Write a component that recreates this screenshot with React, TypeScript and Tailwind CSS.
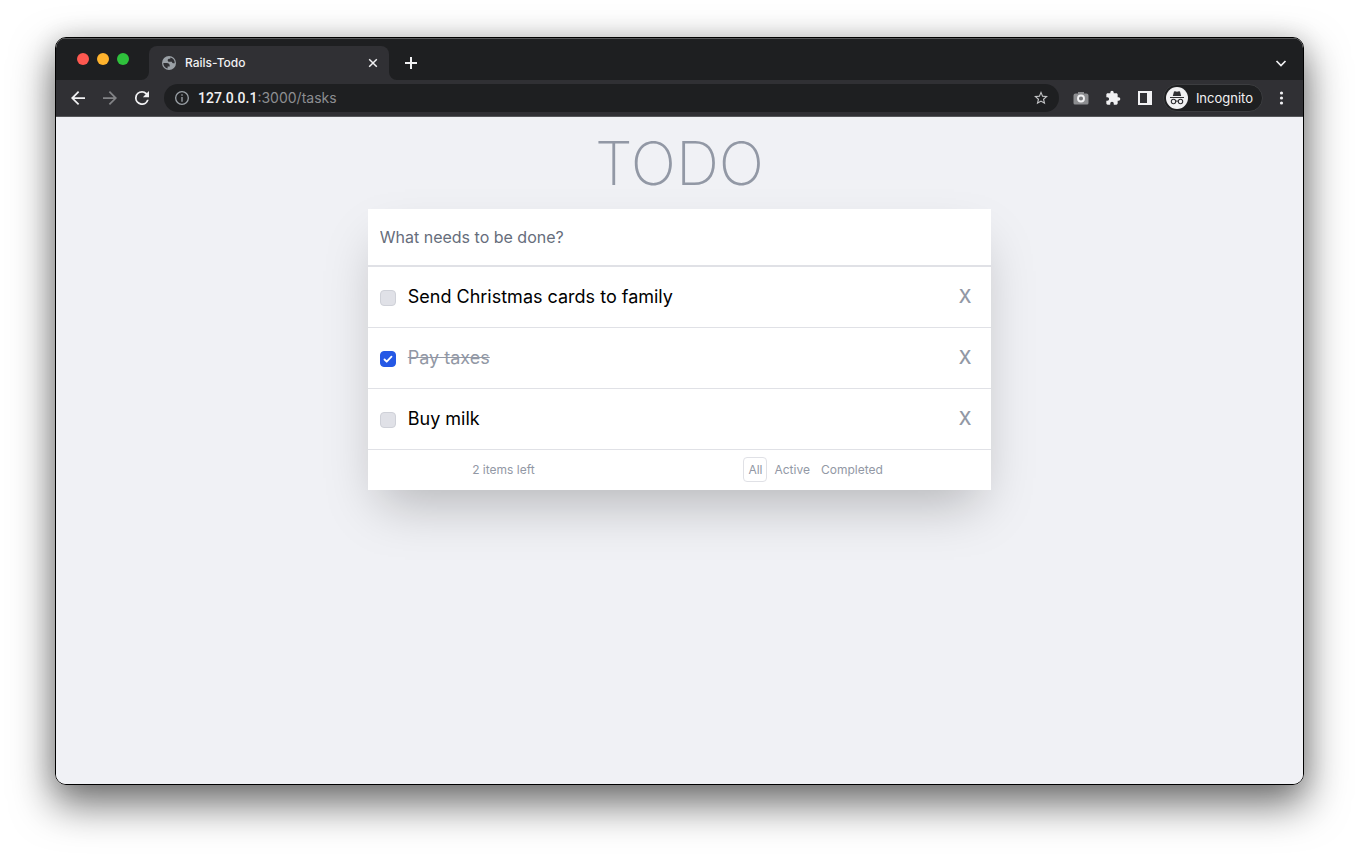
import { useState } from "react";

type Task = { id: number; title: string; done: boolean };

const initialTasks: Task[] = [
  { id: 1, title: "Send Christmas cards to family", done: false },
  { id: 2, title: "Pay taxes", done: true },
  { id: 3, title: "Buy milk", done: false },
];

const filters = ["All", "Active", "Completed"] as const;
type Filter = (typeof filters)[number];

function TabStrip() {
  return (
    <div className="flex h-[42px] items-end bg-[#1e1f21] pl-[21px] pr-[15px] shadow-[inset_0_1px_0_#57585a]">
      <div className="flex gap-2 pb-[15px]">
        <button aria-label="Close window" className="size-3 rounded-full bg-[#fe5850]" />
        <button aria-label="Minimize window" className="size-3 rounded-full bg-[#ffb32d]" />
        <button aria-label="Zoom window" className="size-3 rounded-full bg-[#2fc13c]" />
      </div>
      <TabCorner side="left" />
      <div className="flex h-[34px] w-60 items-center rounded-t-lg bg-[#303034] pl-3 pr-2.5 text-[12px] font-medium text-[#f1f1f3]">
        <svg viewBox="0 0 16 16" className="size-4" aria-hidden="true">
          <circle cx="8" cy="8" r="7" fill="#9aa0a6" />
          <path
            d="M2.300 8H5.600C8 8 9 9.200 8.700 11.600H6.600V13.400A5.700 5.700 0 0 1 2.300 8zM9.300 2.400A5.700 5.700 0 0 1 13.700 8.200H12.200C11.500 8.200 11.200 7.900 11 7.300L10.800 6.800H8.600C7.300 6.800 6.700 6.200 6.700 5.200S7.400 3.700 8.400 3.700H9.300z"
            fill="#303034"
          />
        </svg>
        <span className="ml-2 flex-1">Rails-Todo</span>
        <button aria-label="Close tab">
          <svg viewBox="0 0 12 12" className="size-3" fill="none" stroke="currentColor" strokeWidth="1.500" aria-hidden="true">
            <path d="M2.200 2.200l7.600 7.600M9.800 2.200l-7.600 7.600" />
          </svg>
        </button>
      </div>
      <TabCorner side="right" />
      <button aria-label="New tab" className="ml-[7px] mb-2.5 text-[#f1f1f3]">
        <svg viewBox="0 0 14 14" className="size-3.5" fill="none" stroke="currentColor" strokeWidth="2" aria-hidden="true">
          <path d="M7 1v12M1 7h12" />
        </svg>
      </button>
      <button aria-label="Search tabs" className="ml-auto mb-2.5 text-[#f1f1f3]">
        <svg viewBox="0 0 14 14" className="size-3.5" fill="none" stroke="currentColor" strokeWidth="1.700" aria-hidden="true">
          <path d="M2.500 5l4.500 4.500L11.500 5" />
        </svg>
      </button>
    </div>
  );
}

function TabCorner({ side }: { side: "left" | "right" }) {
  return (
    <svg viewBox="0 0 8 8" className={side === "left" ? "ml-3 size-2" : "size-2"} fill="#303034" aria-hidden="true">
      <path d={side === "left" ? "M8 0v8H0a8 8 0 0 0 8-8z" : "M0 0v8h8a8 8 0 0 1-8-8z"} />
    </svg>
  );
}

function Toolbar() {
  return (
    <div className="flex h-[37px] items-center border-b border-[#56575a] bg-[#303034] px-[15px] text-[#f1f1f3]">
      <button aria-label="Back">
        <svg viewBox="4 4 16 16" className="size-3.5" fill="currentColor" aria-hidden="true">
          <path d="M20 11H7.830l5.590-5.590L12 4l-8 8 8 8 1.410-1.410L7.830 13H20z" />
        </svg>
      </button>
      <button aria-label="Forward" className="ml-[18px] text-[#828386]">
        <svg viewBox="4 4 16 16" className="size-3.5" fill="currentColor" aria-hidden="true">
          <path d="M12 4l-1.410 1.410L16.170 11H4v2h12.170l-5.580 5.590L12 20l8-8z" />
        </svg>
      </button>
      <button aria-label="Reload" className="ml-[18px]">
        <svg viewBox="4 4 16 16" className="size-3.5" fill="currentColor" aria-hidden="true">
          <path d="M17.650 6.350A7.958 7.958 0 0 0 12 4a8 8 0 1 0 7.730 10h-2.080A6 6 0 1 1 12 6c1.660 0 3.140.69 4.220 1.780L13 11h7V4z" />
        </svg>
      </button>
      <div className="ml-[15px] flex h-7 flex-1 items-center rounded-full bg-[#1e1f21] pl-2.5 pr-[11px]">
        <svg viewBox="0 0 24 24" className="size-4 shrink-0 fill-[#9aa0a6]" aria-hidden="true">
          <path d="M11 6.500h2v2.200h-2zm0 4h2v7h-2zm1-9a10.500 10.500 0 1 0 0 21 10.500 10.500 0 0 0 0-21zm0 19a8.500 8.500 0 1 1 0-17 8.500 8.500 0 0 1 0 17z" />
        </svg>
        <a href="#tasks" className="ml-2 flex-1 text-[14px] leading-4 text-[#8d8e91]">
          <span className="font-['Roboto',sans-serif] font-medium text-[#f1f1f3]">127.0.0.1</span>:3000/tasks
        </a>
        <button aria-label="Bookmark this tab" className="text-[#c3c4c6]">
          <svg viewBox="2 2 20 20" className="size-3.5" fill="currentColor" aria-hidden="true">
            <path d="M22 9.240l-7.190-.62L12 2 9.190 8.630 2 9.240l5.460 4.730L5.820 21 12 17.270 18.180 21l-1.630-7.030zM12 15.400l-3.760 2.270 1-4.280-3.320-2.880 4.380-.38L12 6.100l1.710 4.040 4.380.38-3.320 2.880 1 4.280z" />
          </svg>
        </button>
      </div>
      <button aria-label="Screenshot" className="ml-3.5">
        <svg viewBox="0 0 16 16" className="size-4" aria-hidden="true">
          <path d="M5 2h6v1.500h2.500a2 2 0 0 1 2 2V13a1.500 1.500 0 0 1-1.500 1.500H2A1.500 1.500 0 0 1 .5 13V5.500a2 2 0 0 1 2-2H5z" fill="#8d8e91" />
          <circle cx="8" cy="8.500" r="3" fill="#77787b" stroke="#f1f1f3" strokeWidth="1.900" />
        </svg>
      </button>
      <button aria-label="Extensions" className="ml-4">
        <svg viewBox="0 0 24 24" className="size-4" fill="currentColor" aria-hidden="true">
          <path d="M20.500 11H19V7c0-1.100-.9-2-2-2h-4V3.500a2.500 2.500 0 0 0-5 0V5H4c-1.100 0-1.990.9-1.990 2v3.800H3.500a2.700 2.700 0 0 1 0 5.400H2V20c0 1.100.9 2 2 2h3.800v-1.500a2.700 2.700 0 0 1 5.400 0V22H17c1.100 0 2-.9 2-2v-4h1.500a2.500 2.500 0 0 0 0-5z" />
        </svg>
      </button>
      <button aria-label="Side panel" className="ml-4">
        <svg viewBox="0 0 16 16" className="size-4" fill="currentColor" aria-hidden="true">
          <path d="M1 1h14v14H1zM3 3v10h7V3z" fillRule="evenodd" />
        </svg>
      </button>
      <button className="ml-2.5 flex h-7 items-center gap-2 rounded-full border border-[#3c3d40] bg-[#1e1f21] pl-0.5 pr-[9px] text-[13px] leading-4">
        <svg viewBox="0 0 22 22" className="size-[22px]" aria-hidden="true">
          <circle cx="11" cy="11" r="11" fill="#f1f1f3" />
          <path d="M8 4.500l1-.3 2 .6 2-.6 1 .3L15.200 9H6.800zM4 10h14v1.100H4z" fill="#303034" />
          <g fill="none" stroke="#303034" strokeWidth="1.100">
            <circle cx="7.500" cy="14.500" r="2.200" />
            <circle cx="14.500" cy="14.500" r="2.200" />
            <path d="M9.700 14.300q1.300-.7 2.600 0" />
          </g>
        </svg>
        Incognito
      </button>
      <button aria-label="Browser menu" className="ml-[13px]">
        <svg viewBox="0 0 12 16" className="h-4 w-3" fill="currentColor" aria-hidden="true">
          <circle cx="5.500" cy="3" r="1.600" />
          <circle cx="5.500" cy="8" r="1.600" />
          <circle cx="5.500" cy="13" r="1.600" />
        </svg>
      </button>
    </div>
  );
}

function TaskRow({ task, onToggle, onRemove }: { task: Task; onToggle: () => void; onRemove: () => void }) {
  const id = `task-${task.id}`;
  return (
    <li className="flex items-center border-b border-[#e0e1e6] py-4 pl-3 pr-5 text-lg">
      <span className="mt-0.5 grid size-4">
        <input
          id={id}
          type="checkbox"
          checked={task.done}
          onChange={onToggle}
          className="peer col-start-1 row-start-1 size-4 appearance-none rounded border border-[#cfd1d8] bg-[#e0e1e7] checked:border-[#2558e5] checked:bg-[#2558e5]"
        />
        <svg
          viewBox="0 0 16 16"
          className="pointer-events-none invisible col-start-1 row-start-1 size-4 peer-checked:visible"
          fill="none"
          stroke="white"
          strokeWidth="1.800"
          strokeLinecap="round"
          strokeLinejoin="round"
          aria-hidden="true"
        >
          <path d="M4.500 8.500l2.200 2.200L11.500 5.700" />
        </svg>
      </span>
      <label htmlFor={id} className={task.done ? "ml-3 flex-1 text-[#9298a5] line-through" : "ml-3 flex-1 text-black"}>
        {task.title}
      </label>
      <button onClick={onRemove} aria-label={`Delete ${task.title}`} className="font-medium text-[#9298a5]">
        X
      </button>
    </li>
  );
}

function TodoApp() {
  const [tasks, setTasks] = useState(initialTasks);
  const [filter, setFilter] = useState<Filter>("All");
  const [draft, setDraft] = useState("");
  const shown = tasks.filter((t) => filter === "All" || t.done === (filter === "Completed"));

  return (
    <main className="flex-1 bg-[#f0f1f5]">
      <h1 className="py-4 text-center text-6xl leading-none font-extralight text-[#9298a5]">TODO</h1>
      <section className="mx-auto w-1/2 bg-white shadow-2xl">
        <form
          onSubmit={(e) => {
            e.preventDefault();
            if (!draft.trim()) return;
            setTasks([...tasks, { id: Date.now(), title: draft.trim(), done: false }]);
            setDraft("");
          }}
        >
          <input
            aria-label="New task"
            value={draft}
            onChange={(e) => setDraft(e.target.value)}
            placeholder="What needs to be done?"
            className="block w-full border-b-2 border-[#e0e1e6] px-3 py-4 text-base outline-none placeholder:text-[#666d7b]"
          />
        </form>
        <ul>
          {shown.map((task) => (
            <TaskRow
              key={task.id}
              task={task}
              onToggle={() => setTasks(tasks.map((t) => (t.id === task.id ? { ...t, done: !t.done } : t)))}
              onRemove={() => setTasks(tasks.filter((t) => t.id !== task.id))}
            />
          ))}
        </ul>
        <footer className="flex items-start justify-around pt-[7px] pb-2 text-xs text-[#9298a5]">
          <span className="leading-[25px]">{tasks.filter((t) => !t.done).length} items left</span>
          <nav className="flex items-center gap-[3px]">
            {filters.map((name) => (
              <button
                key={name}
                onClick={() => setFilter(name)}
                aria-pressed={filter === name}
                className={
                  filter === name
                    ? "rounded border border-[#e0e1e6] p-1 leading-[15px]"
                    : "p-1 leading-[15px]"
                }
              >
                {name}
              </button>
            ))}
          </nav>
        </footer>
      </section>
    </main>
  );
}

export default function App() {
  return (
    <div className="flex min-h-screen flex-col bg-white px-[55px] pt-[37px] pb-[73px] font-['Inter',sans-serif]">
      <div className="flex flex-1 flex-col overflow-hidden rounded-[11px] border border-black shadow-[0_18px_40px_2px_rgba(0,0,0,0.55),0_0_24px_rgba(0,0,0,0.12)]">
        <TabStrip />
        <Toolbar />
        <TodoApp />
      </div>
    </div>
  );
}
